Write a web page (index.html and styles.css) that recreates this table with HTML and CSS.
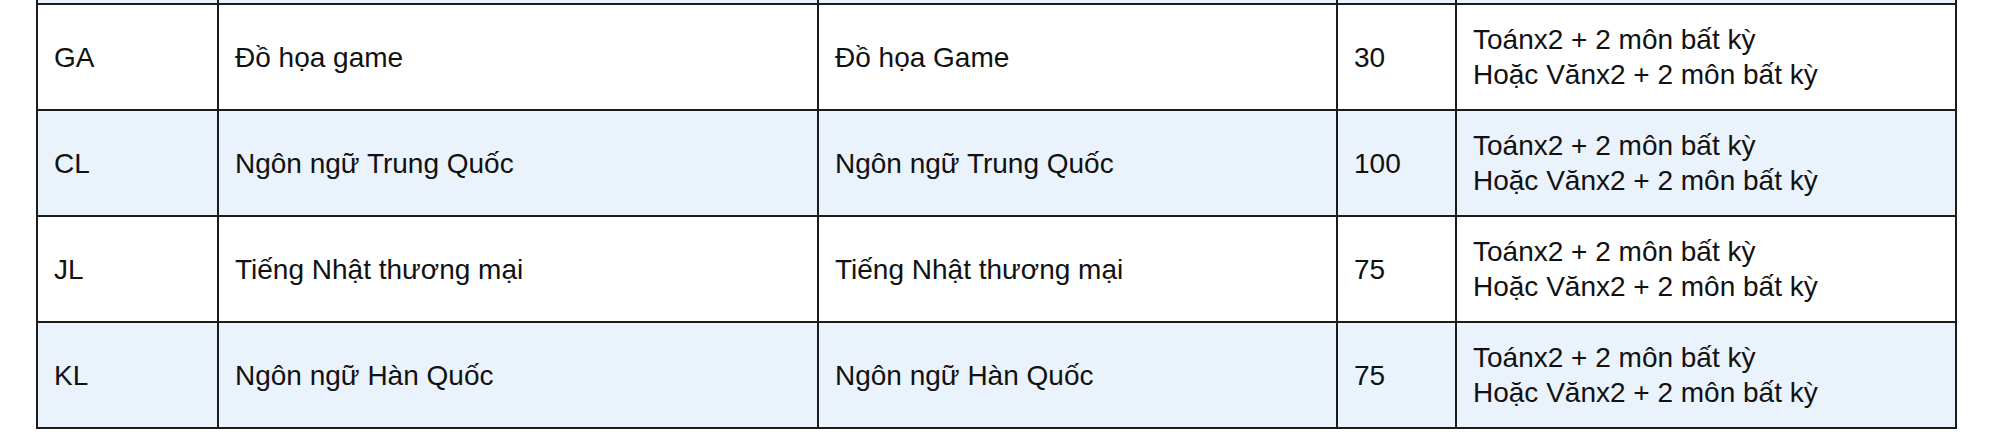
FILE: index.html
```html
<!DOCTYPE html>
<html lang="vi">
<head>
<meta charset="utf-8">
<title>Ngành tuyển sinh</title>
<link rel="stylesheet" href="styles.css">
</head>
<body>
<div class="wrap">
<table class="majors">
  <colgroup>
    <col class="c-code">
    <col class="c-name">
    <col class="c-major">
    <col class="c-quota">
    <col class="c-combo">
  </colgroup>
  <tbody>
    <tr class="prev alt"><td></td><td></td><td></td><td></td><td></td></tr>
    <tr>
      <td>GA</td>
      <td>Đồ họa game</td>
      <td>Đồ họa Game</td>
      <td>30</td>
      <td>Toánx2 + 2 môn bất kỳ<br>Hoặc Vănx2 + 2 môn bất kỳ</td>
    </tr>
    <tr class="alt">
      <td>CL</td>
      <td>Ngôn ngữ Trung Quốc</td>
      <td>Ngôn ngữ Trung Quốc</td>
      <td>100</td>
      <td>Toánx2 + 2 môn bất kỳ<br>Hoặc Vănx2 + 2 môn bất kỳ</td>
    </tr>
    <tr>
      <td>JL</td>
      <td>Tiếng Nhật thương mại</td>
      <td>Tiếng Nhật thương mại</td>
      <td>75</td>
      <td>Toánx2 + 2 môn bất kỳ<br>Hoặc Vănx2 + 2 môn bất kỳ</td>
    </tr>
    <tr class="alt">
      <td>KL</td>
      <td>Ngôn ngữ Hàn Quốc</td>
      <td>Ngôn ngữ Hàn Quốc</td>
      <td>75</td>
      <td>Toánx2 + 2 môn bất kỳ<br>Hoặc Vănx2 + 2 môn bất kỳ</td>
    </tr>
  </tbody>
</table>
</div>
</body>
</html>
```

FILE: styles.css
```css
html, body {
  margin: 0;
  padding: 0;
  background: #ffffff;
}

body {
  font-family: "Liberation Sans", Arial, Helvetica, sans-serif;
  color: #111111;
  overflow: hidden;
}

.wrap {
  padding-left: 36px;
}

.majors {
  border-collapse: collapse;
  table-layout: fixed;
  width: 1919px;
  margin-top: -40px;
  font-size: 28px;
  line-height: 35px;
}

.c-code { width: 181px; }
.c-name { width: 600px; }
.c-major { width: 519px; }
.c-quota { width: 119px; }
.c-combo { width: 500px; }

.majors td {
  border: 2px solid #1c1c1c;
  height: 106px;
  padding: 0 16px;
  vertical-align: middle;
  box-sizing: border-box;
}

.majors tr.prev td {
  height: 43px;
  padding: 0;
}

.majors tr.alt td {
  background: #eaf2fb;
}
```
